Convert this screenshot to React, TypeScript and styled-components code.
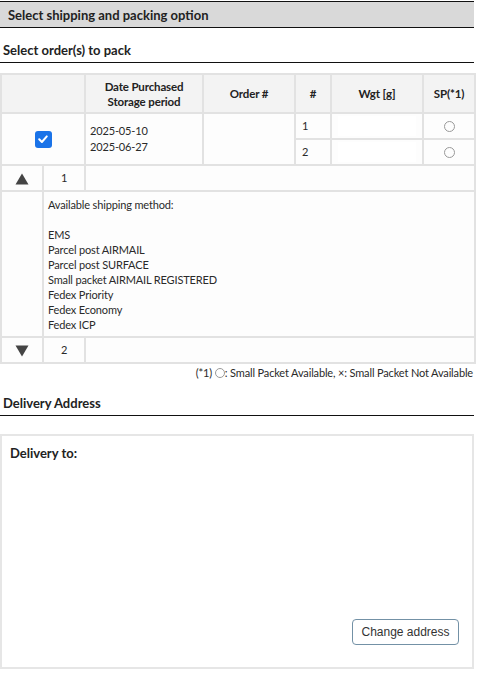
import styled, { createGlobalStyle } from 'styled-components'

const GlobalStyle = createGlobalStyle`
  body {
    margin: 0;
    background: #fff;
    font-family: Lato, "Noto Sans", sans-serif;
    font-size: 11px;
    letter-spacing: -0.15px;
    color: #2a2a2a;
  }
`

const methods = [
  'EMS',
  'Parcel post AIRMAIL',
  'Parcel post SURFACE',
  'Small packet AIRMAIL REGISTERED',
  'Fedex Priority',
  'Fedex Economy',
  'Fedex ICP',
]

const Triangle = ({ dir }: { dir: 'up' | 'down' }) => (
  <svg width="14" height="12" viewBox="0 0 14 12">
    <path
      d={dir === 'up' ? 'M7 0.5 L13.5 11.5 L0.5 11.5 Z' : 'M0.5 0.5 L13.5 0.5 L7 11.5 Z'}
      fill="#444"
    />
  </svg>
)

export default function App() {
  return (
    <>
      <GlobalStyle />
      <Page>
        <TitleBar>Select shipping and packing option</TitleBar>

        <SectionTitle>Select order(s) to pack</SectionTitle>

        <OrderTable>
          <colgroup>
            <col style={{ width: 42 }} />
            <col style={{ width: 42 }} />
            <col style={{ width: 118 }} />
            <col style={{ width: 92 }} />
            <col style={{ width: 36 }} />
            <col style={{ width: 92 }} />
            <col style={{ width: 52 }} />
          </colgroup>
          <thead>
            <tr>
              <Th colSpan={2} />
              <Th>
                Date Purchased
                <br />
                Storage period
              </Th>
              <Th>Order #</Th>
              <Th>#</Th>
              <Th>Wgt [g]</Th>
              <Th>SP(*1)</Th>
            </tr>
          </thead>
          <tbody>
            <tr>
              <Td colSpan={2} rowSpan={2} $align="center">
                <CheckBox>
                  <svg width="12" height="12" viewBox="0 0 12 12">
                    <path
                      d="M2.2 6.3 L4.9 9 L9.8 3.4"
                      fill="none"
                      stroke="#fff"
                      strokeWidth="2"
                      strokeLinecap="round"
                      strokeLinejoin="round"
                    />
                  </svg>
                </CheckBox>
              </Td>
              <Td rowSpan={2}>
                <DateText>
                  2025-05-10
                  <br />
                  2025-06-27
                </DateText>
              </Td>
              <Td rowSpan={2} />
              <NumCell>1</NumCell>
              <Td>
                <WeightInput />
              </Td>
              <Td $align="center">
                <Radio />
              </Td>
            </tr>
            <tr>
              <NumCell>2</NumCell>
              <Td>
                <WeightInput />
              </Td>
              <Td $align="center">
                <Radio />
              </Td>
            </tr>
            <tr>
              <Td $align="center">
                <Triangle dir="up" />
              </Td>
              <Td $align="center">1</Td>
              <Td colSpan={5} />
            </tr>
            <tr>
              <Td />
              <DetailCell colSpan={6}>
                Available shipping method:
                <br />
                <br />
                {methods.map((m) => (
                  <div key={m}>{m}</div>
                ))}
              </DetailCell>
            </tr>
            <tr>
              <Td $align="center">
                <Triangle dir="down" />
              </Td>
              <Td $align="center">2</Td>
              <Td colSpan={5} />
            </tr>
          </tbody>
        </OrderTable>

        <Footnote>
          (*1) <SmallCircle />: Small Packet Available, ×: Small Packet Not
          Available
        </Footnote>

        <SectionTitle $gap={12}>Delivery Address</SectionTitle>

        <AddressBox>
          <AddressLabel>Delivery to:</AddressLabel>
          <ButtonRow>
            <ChangeButton>Change address</ChangeButton>
          </ButtonRow>
        </AddressBox>
      </Page>
    </>
  )
}

const Page = styled.div`
  width: 474px;
  padding-top: 1px;
`

const TitleBar = styled.div`
  height: 25px;
  line-height: 26px;
  padding-left: 8px;
  background: #d9d9d9;
  border-top: 1px solid #111;
  border-bottom: 1px solid #111;
  font-weight: 700;
  font-size: 13px;
  letter-spacing: 0;
  color: #222;
`

const SectionTitle = styled.div<{ $gap?: number }>`
  margin-top: ${({ $gap }) => $gap ?? 11}px;
  padding: 0 3px;
  height: 23px;
  line-height: 22px;
  border-bottom: 1px solid #111;
  font-weight: 700;
  font-size: 13px;
  letter-spacing: 0;
  color: #222;
`

const OrderTable = styled.table`
  margin-top: 10px;
  width: 474px;
  table-layout: fixed;
  border-collapse: collapse;
  border: 2px solid #e2e2e2;
`

const Th = styled.th`
  height: 37px;
  padding: 0 2px;
  background: #f3f3f3;
  border: 2px solid #e2e2e2;
  font-weight: 700;
  font-size: 11.5px;
  line-height: 15px;
  text-align: center;
  color: #222;
`

const Td = styled.td<{ $align?: 'left' | 'center' }>`
  height: 24px;
  padding: 0 4px;
  border: 2px solid #e2e2e2;
  background: #fdfdfd;
  text-align: ${({ $align }) => $align ?? 'left'};
  vertical-align: middle;
  line-height: 12px;
  color: #2a2a2a;

  svg {
    display: inline-block;
    vertical-align: middle;
  }
`

const NumCell = styled(Td)`
  padding-left: 6px;
`

const DateText = styled.div`
  line-height: 16px;
`

const DetailCell = styled(Td)`
  padding: 5px 4px 4px;
  line-height: 15px;
  vertical-align: top;
`

const CheckBox = styled.span`
  display: inline-flex;
  align-items: center;
  justify-content: center;
  width: 17px;
  height: 17px;
  border-radius: 3px;
  background: #1a73e8;
  vertical-align: middle;
`

const WeightInput = styled.div`
  height: 20px;
  margin: 0 2px;
  background: #fff;
`

const Radio = styled.span`
  display: inline-block;
  width: 9px;
  height: 9px;
  border: 1px solid #999;
  border-radius: 50%;
  vertical-align: middle;
`

const Footnote = styled.div`
  padding: 1px 1px 0 0;
  line-height: 15px;
  text-align: right;
  color: #2a2a2a;
`

const SmallCircle = styled.span`
  display: inline-block;
  width: 8px;
  height: 8px;
  border: 1px solid #999;
  border-radius: 50%;
  vertical-align: -1px;
`

const AddressBox = styled.div`
  box-sizing: border-box;
  margin-top: 18px;
  height: 235px;
  padding: 9px 13px 22px 8px;
  border: 2px solid #e6e6e6;
  display: flex;
  flex-direction: column;
  justify-content: space-between;
`

const AddressLabel = styled.div`
  line-height: 17px;
  font-weight: 700;
  font-size: 13px;
  letter-spacing: 0;
  color: #222;
`

const ButtonRow = styled.div`
  display: flex;
  justify-content: flex-end;
`

const ChangeButton = styled.button`
  width: 107px;
  height: 26px;
  background: #fff;
  border: 1px solid #7391a6;
  border-radius: 4px;
  font-family: "Liberation Sans", Arial, sans-serif;
  font-size: 12px;
  letter-spacing: 0;
  color: #333;
`
